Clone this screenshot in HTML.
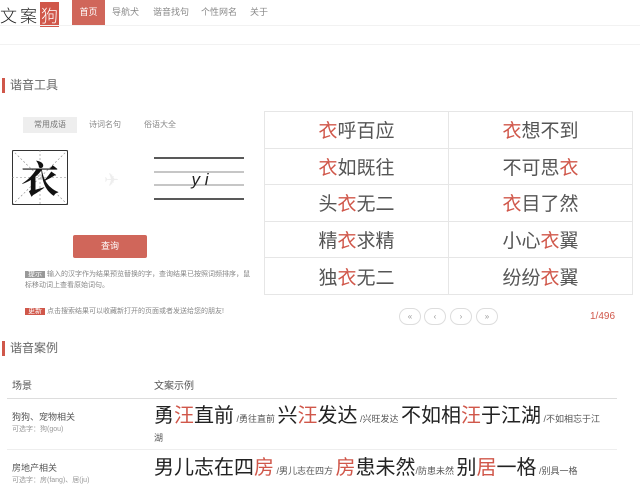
<!DOCTYPE html>
<html><head><meta charset="utf-8"><style>
*{margin:0;padding:0;box-sizing:border-box}
body{width:640px;height:488px;overflow:hidden;background:#fff;font-family:"Liberation Sans","Noto Sans CJK SC",sans-serif;color:#555;position:relative}
.a{position:absolute}
.r{color:#d0574a}
.nav a{position:absolute;top:0;height:26px;line-height:24px;font-size:9px;color:#888}
td{border:1px solid #e6e6e6;text-align:center;font-size:19px;color:#555;height:36.6px}
.pg{position:absolute;top:308px;width:22px;height:17px;border:1px solid #ddd;border-radius:9px;font-size:8px;color:#999;text-align:center;line-height:15px}
small{font-size:9px;color:#555}
</style></head><body>
<div class="a" style="left:0;top:2px;font-size:17px;color:#222;letter-spacing:3px;font-family:'Noto Sans CJK SC',sans-serif;font-weight:300">文案<span style="background:#d0574a;color:#fff;padding:0 1px;letter-spacing:0">狗</span></div>
<div class="nav">
<a style="left:72px;width:33px;background:#d0665a;color:#fff;text-align:center">首页</a>
<a style="left:112px">导航犬</a>
<a style="left:153px">谐音找句</a>
<a style="left:201px">个性网名</a>
<a style="left:250px">关于</a>
</div>
<div class="a" style="left:0;top:25px;width:640px;height:1px;background:#f2f2f2"></div>
<div class="a" style="left:0;top:44px;width:640px;height:1px;background:#f2f2f2"></div>
<div class="a" style="left:2px;top:78px;width:3px;height:15px;background:#d0574a"></div>
<div class="a" style="left:10px;top:76px;font-size:12px;color:#666">谐音工具</div>
<div class="a" style="left:23px;top:117px;width:54px;height:16px;background:#eee;font-size:8px;text-align:center;line-height:16px;color:#777">常用成语</div>
<div class="a" style="left:89px;top:117px;font-size:8px;line-height:16px;color:#888">诗词名句</div>
<div class="a" style="left:144px;top:117px;font-size:8px;line-height:16px;color:#888">俗语大全</div>
<svg class="a" style="left:12px;top:150px" width="57" height="56">
<rect x="0.5" y="0.5" width="55" height="54" fill="none" stroke="#333"/>
<g stroke="#888" stroke-dasharray="2,2" stroke-width=".6"><line x1="0" y1="0" x2="56" y2="55"/><line x1="56" y1="0" x2="0" y2="55"/><line x1="28" y1="0" x2="28" y2="55"/><line x1="0" y1="27.5" x2="56" y2="27.5"/></g>
<text x="28" y="43" font-size="38" font-weight="bold" text-anchor="middle" fill="#111" font-family="Noto Serif CJK SC,serif">衣</text>
</svg>
<div class="a" style="left:104px;top:170px;font-size:18px;color:#eee">✈</div>
<svg class="a" style="left:154px;top:156px" width="92" height="46">
<line x1="0" y1="2" x2="90" y2="2" stroke="#222" stroke-width="1.5"/>
<line x1="0" y1="16" x2="90" y2="16" stroke="#666" stroke-width=".8"/>
<line x1="0" y1="29" x2="90" y2="29" stroke="#666" stroke-width=".8"/>
<line x1="0" y1="43" x2="90" y2="43" stroke="#222" stroke-width="1.5"/>
<text x="46" y="29" font-size="17" font-style="italic" text-anchor="middle" fill="#222" font-family="Liberation Sans">y i</text>
</svg>
<div class="a" style="left:73px;top:235px;width:74px;height:23px;background:#d0665a;color:#fff;font-size:9px;text-align:center;line-height:23px;border-radius:2px">查询</div>
<div class="a" style="left:25px;top:269px;width:230px;font-size:7px;line-height:11px;color:#888"><span style="background:#999;color:#fff;padding:0 3px">提示</span> 输入的汉字作为结果预览替换的字，查询结果已按照词频排序，鼠标移动词上查看原始词句。</div>
<div class="a" style="left:25px;top:306px;font-size:7px;line-height:11px;color:#888"><span style="background:#d0574a;color:#fff;padding:0 3px">更新</span> 点击搜索结果可以收藏新打开的页面或者发送给您的朋友!</div>
<table class="a" style="left:264px;top:111px;width:369px;border-collapse:collapse">
<tr><td><span class="r">衣</span>呼百应</td><td><span class="r">衣</span>想不到</td></tr>
<tr><td><span class="r">衣</span>如既往</td><td>不可思<span class="r">衣</span></td></tr>
<tr><td>头<span class="r">衣</span>无二</td><td><span class="r">衣</span>目了然</td></tr>
<tr><td>精<span class="r">衣</span>求精</td><td>小心<span class="r">衣</span>翼</td></tr>
<tr><td>独<span class="r">衣</span>无二</td><td>纷纷<span class="r">衣</span>翼</td></tr>
</table>
<div class="pg" style="left:399px">«</div><div class="pg" style="left:424px">‹</div><div class="pg" style="left:450px">›</div><div class="pg" style="left:476px">»</div>
<div class="a" style="left:590px;top:311px;font-size:10px;color:#d0574a">1/496</div>
<div class="a" style="left:2px;top:341px;width:3px;height:15px;background:#d0574a"></div>
<div class="a" style="left:10px;top:339px;font-size:12px;color:#666">谐音案例</div>
<div class="a" style="left:12px;top:377px;font-size:10px;color:#555">场景</div>
<div class="a" style="left:154px;top:377px;font-size:10px;color:#555">文案示例</div>
<div class="a" style="left:7px;top:398px;width:610px;height:1px;background:#ddd"></div>
<div class="a" style="left:7px;top:449px;width:610px;height:1px;background:#eee"></div>
<div class="a" style="left:12px;top:410px;font-size:9px;color:#555">狗狗、宠物相关</div>
<div class="a" style="left:12px;top:424px;font-size:7px;color:#999">可选字：狗(gou)</div>
<div class="a" style="left:154px;top:402px;font-size:20px;line-height:28px;color:#222;white-space:nowrap">勇<span class="r">汪</span>直前<small> /勇往直前 </small>兴<span class="r">汪</span>发达<small> /兴旺发达 </small>不如相<span class="r">汪</span>于江湖<small> /不如相忘于江</small></div>
<div class="a" style="left:154px;top:431px;font-size:9px;color:#555">湖</div>
<div class="a" style="left:12px;top:461px;font-size:9px;color:#555">房地产相关</div>
<div class="a" style="left:12px;top:475px;font-size:7px;color:#999">可选字：房(fang)、居(ju)</div>
<div class="a" style="left:154px;top:454px;width:470px;font-size:20px;line-height:28px;color:#222;white-space:nowrap">男儿志在四<span class="r">房</span><small> /男儿志在四方 </small><span class="r">房</span>患未然<small>/防患未然 </small>别<span class="r">居</span>一格<small> /别具一格</small></div>
</body></html>
